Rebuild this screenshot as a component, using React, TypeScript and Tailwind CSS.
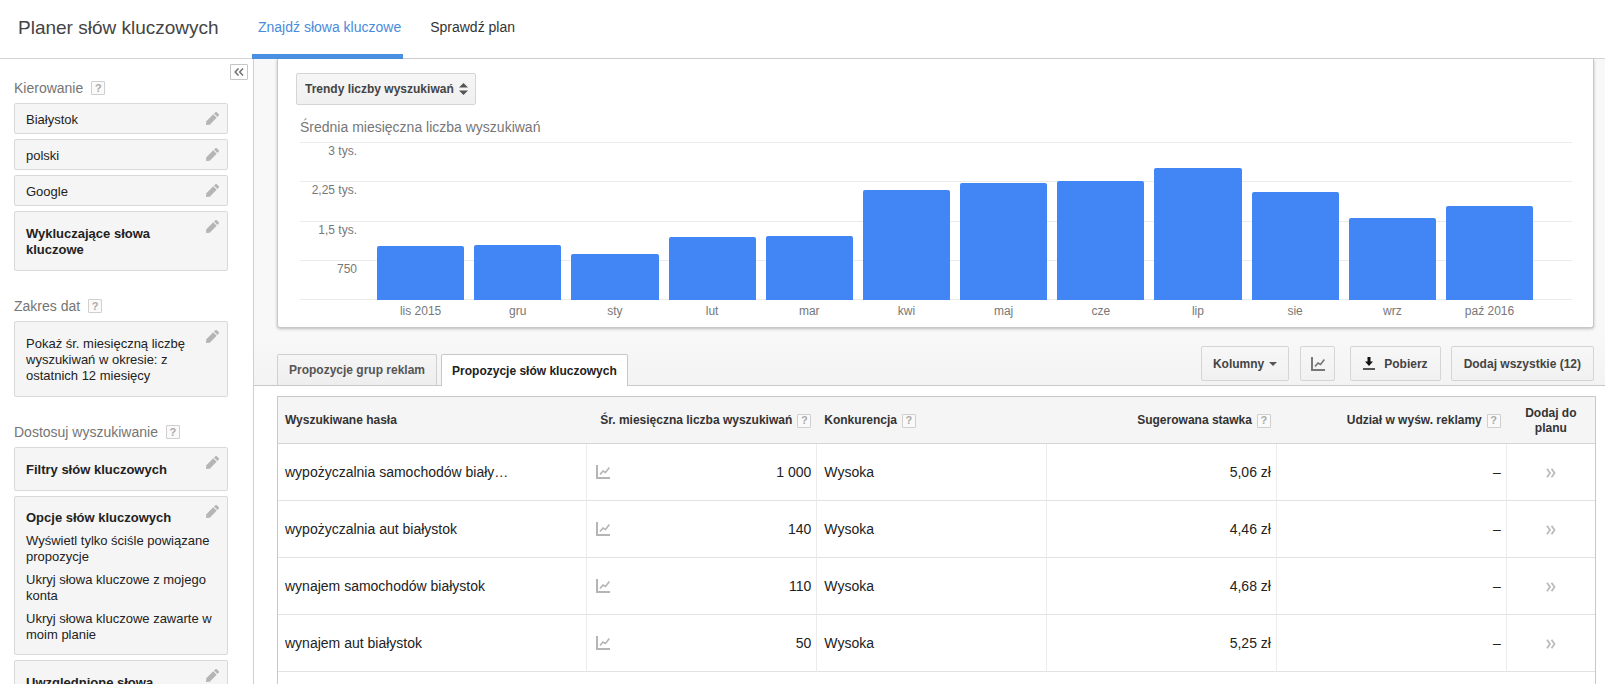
import type { ReactNode } from "react";

const months = [
  { label: "lis 2015", value: 1030 },
  { label: "gru", value: 1050 },
  { label: "sty", value: 880 },
  { label: "lut", value: 1195 },
  { label: "mar", value: 1215 },
  { label: "kwi", value: 2080 },
  { label: "maj", value: 2225 },
  { label: "cze", value: 2260 },
  { label: "lip", value: 2515 },
  { label: "sie", value: 2060 },
  { label: "wrz", value: 1560 },
  { label: "paź 2016", value: 1790 },
];

const ticks = ["3 tys.", "2,25 tys.", "1,5 tys.", "750"];
const chartMax = 3000;

const keywords = [
  { phrase: "wypożyczalnia samochodów biały…", searches: "1 000", bid: "5,06 zł" },
  { phrase: "wypożyczalnia aut białystok", searches: "140", bid: "4,46 zł" },
  { phrase: "wynajem samochodów białystok", searches: "110", bid: "4,68 zł" },
  { phrase: "wynajem aut białystok", searches: "50", bid: "5,25 zł" },
];

const Help = () => (
  <button
    type="button"
    aria-label="Pomoc"
    className="inline-flex h-[14px] w-[14px] shrink-0 items-center justify-center rounded-[1px] border border-[#cfcfcf] bg-[#fafafa] text-[11px] leading-none font-bold text-[#aaa]"
  >
    ?
  </button>
);

const Pencil = () => (
  <svg viewBox="0 0 13 13" className="h-[13px] w-[13px]" fill="#b5b5b5">
    <path d="M0 13l.3-3.800L7.200 2.300l3.500 3.500-6.900 6.900z" />
    <path d="M8 1.500L9.200.4c.5-.5 1.300-.5 1.800 0L12.600 2c.5.5.5 1.300 0 1.800L11.500 5z" />
  </svg>
);

const ChartIcon = ({ className }: { className: string }) => (
  <svg viewBox="0 0 14 14" className={className} fill="none" stroke="currentColor" strokeWidth="2">
    <path d="M1 0v13h13" />
    <path d="M4 9.500l3-3.500 2.500 1.500L13.400 2.500" strokeWidth="1.700" />
  </svg>
);

const SectionTitle = ({ children }: { children: ReactNode }) => (
  <h2 className="mb-[5px] flex items-center gap-2 text-sm leading-5 text-[#757575]">
    {children}
    <Help />
  </h2>
);

const OptionCard = ({ children, slim }: { children: ReactNode; slim?: boolean }) => (
  <div
    className={`flex justify-between rounded-[2px] border border-[#d9d9d9] bg-[#f5f5f5] pl-[11px] text-[13px] text-[#222] ${
      slim ? "pt-[7px] pb-[5px] leading-[17px]" : "pt-[14px] pb-3 leading-4"
    }`}
  >
    <div className="min-w-0 flex-1">{children}</div>
    <button type="button" aria-label="Edytuj" className={`mr-2 h-[13px] ${slim ? "mt-px" : "-mt-[6px]"}`}>
      <Pencil />
    </button>
  </div>
);

const Sidebar = () => (
  <aside className="flex w-[254px] shrink-0 flex-col overflow-hidden border-r border-[#cfcfcf]">
    <div className="flex h-0 justify-end pt-[5px] pr-[5px]">
      <button
        type="button"
        aria-label="Zwiń panel"
        className="flex h-4 w-[18px] items-center justify-center rounded-[1px] border border-[#c6c6c6] bg-white"
      >
        <svg viewBox="0 0 10 8" className="h-2 w-[10px]" fill="none" stroke="#777" strokeWidth="1.600">
          <path d="M4.500.5L1.200 4l3.300 3.500M9 .5L5.700 4 9 7.500" />
        </svg>
      </button>
    </div>
    <div className="flex flex-col gap-[25px] pt-[14px] pr-[25px] pl-[14px]">
      <section>
        <SectionTitle>Kierowanie</SectionTitle>
        <div className="flex flex-col gap-[5px]">
          <OptionCard slim>Białystok</OptionCard>
          <OptionCard slim>polski</OptionCard>
          <OptionCard slim>Google</OptionCard>
          <OptionCard>
            <b className="block w-[150px]">Wykluczające słowa kluczowe</b>
          </OptionCard>
        </div>
      </section>

      <section>
        <SectionTitle>Zakres dat</SectionTitle>
        <OptionCard>Pokaż śr. miesięczną liczbę wyszukiwań w okresie: z ostatnich 12 miesięcy</OptionCard>
      </section>

      <section>
        <SectionTitle>Dostosuj wyszukiwanie</SectionTitle>
        <div className="flex flex-col gap-[5px]">
          <OptionCard>
            <b>Filtry słów kluczowych</b>
          </OptionCard>
          <OptionCard>
            <div className="-my-px -mr-4 flex flex-col gap-[7px]">
              <b>Opcje słów kluczowych</b>
              <p>Wyświetl tylko ściśle powiązane propozycje</p>
              <p>Ukryj słowa kluczowe z mojego konta</p>
              <p>Ukryj słowa kluczowe zawarte w moim planie</p>
            </div>
          </OptionCard>
          <OptionCard>
            <b>Uwzględnione słowa</b>
          </OptionCard>
        </div>
      </section>
    </div>
  </aside>
);

const TrendChart = () => (
  <section className="mr-[11px] ml-[23px] rounded-b-[3px] border border-t-0 border-[#c8c8c8] bg-white pt-[14px] pr-[21px] pb-2 pl-[18px] shadow-[0_1px_3px_rgba(0,0,0,0.25)]">
    <div className="inline-grid items-center">
      <select
        aria-label="Wykres"
        className="col-start-1 row-start-1 h-8 w-[180px] appearance-none rounded-[2px] border border-[#d5d5d5] bg-linear-to-b from-[#f6f6f6] to-[#f0f0f0] pl-2 text-xs font-bold text-[#444]"
      >
        <option>Trendy liczby wyszukiwań</option>
      </select>
      <svg
        viewBox="0 0 9 12"
        className="pointer-events-none col-start-1 row-start-1 mr-2 h-3 w-[9px] justify-self-end"
        fill="#555"
      >
        <path d="M0 4.500L4.500 0 9 4.500zM0 7.500h9L4.500 12z" />
      </svg>
    </div>
    <h3 className="mt-3 ml-1 text-sm leading-5 text-[#777]">Średnia miesięczna liczba wyszukiwań</h3>
    <div className="mt-[5px] ml-1 grid">
      <div className="col-start-1 row-start-1 flex flex-col text-xs text-[#777]">
        {ticks.map((tick) => (
          <div key={tick} className="flex-1 border-t border-[#ebebeb] leading-4">
            <span className="block w-[57px] text-right">{tick}</span>
          </div>
        ))}
        <div className="border-t border-[#ebebeb]" />
      </div>
      <div className="col-start-1 row-start-1 mr-[39px] ml-[77px] flex h-[158px] items-end gap-[10px]">
        {months.map((m) => (
          <div
            key={m.label}
            className="flex-1 rounded-t-[2px] bg-[#4285f4]"
            style={{ height: `${(m.value / chartMax) * 100}%` }}
          />
        ))}
      </div>
    </div>
    <div className="mt-[3px] mr-[39px] ml-[81px] flex gap-[10px] text-center text-xs leading-4 text-[#777]">
      {months.map((m) => (
        <span key={m.label} className="flex-1">
          {m.label}
        </span>
      ))}
    </div>
  </section>
);

const toolbarButton =
  "flex h-[35px] items-center justify-center rounded-[2px] border border-[#d5d5d5] bg-linear-to-b from-[#f7f7f7] to-[#f1f1f1] text-xs font-bold text-[#444]";

const Toolbar = () => (
  <div className="mt-[18px] flex items-end justify-between border-b border-[#c8c8c8] pr-[11px] pl-[23px]">
    <div role="tablist" className="flex gap-1 text-xs leading-[30px] font-bold">
      <button
        type="button"
        role="tab"
        aria-selected="false"
        className="rounded-t-[2px] border border-b-0 border-[#d0d0d0] bg-linear-to-b from-[#f5f5f5] to-[#eee] px-[11px] text-[#555]"
      >
        Propozycje grup reklam
      </button>
      <button
        type="button"
        role="tab"
        aria-selected="true"
        className="-mb-px rounded-t-[2px] border border-b-0 border-[#c8c8c8] bg-white px-[10px] text-[#222]"
      >
        Propozycje słów kluczowych
      </button>
    </div>
    <div className="mb-1 flex">
      <button type="button" className={`${toolbarButton} mr-[11px] gap-[5px] px-[11px]`}>
        Kolumny
        <svg viewBox="0 0 8 4" className="h-1 w-2" fill="#555">
          <path d="M0 0h8L4 4z" />
        </svg>
      </button>
      <button type="button" aria-label="Wykres" className={`${toolbarButton} mr-[15px] w-[35px]`}>
        <ChartIcon className="h-[14px] w-[14px] shrink-0 text-[#777]" />
      </button>
      <button type="button" className={`${toolbarButton} mr-[10px] gap-[9px] px-3`}>
        <svg viewBox="0 0 12 13" className="h-[13px] w-3">
          <path d="M4.500 0h3v4.500H10L6 9 2 4.500h2.500z" fill="#111" />
          <path d="M0 11h12v2H0z" fill="#555" />
        </svg>
        Pobierz
      </button>
      <button type="button" className={`${toolbarButton} px-3`}>
        Dodaj wszystkie (12)
      </button>
    </div>
  </div>
);

const headCell = "pt-px pr-[6px] pl-[7px] text-right";
const bodyCell = "border-r border-[#ececec] pr-[5px] pl-[7px] text-right";

const KeywordTable = () => (
  <div className="mt-[10px] mr-[9px] ml-[23px] flex-1 border border-b-0 border-[#c8c8c8] bg-white">
    <table className="w-full table-fixed border-separate border-spacing-0">
      <colgroup>
        <col className="w-[23.5%]" />
        <col className="w-[17.45%]" />
        <col className="w-[17.45%]" />
        <col className="w-[17.45%]" />
        <col className="w-[17.45%]" />
        <col />
      </colgroup>
      <thead>
        <tr className="h-[47px] bg-[#f5f5f5] text-xs leading-[15px] text-[#333] *:border-b *:border-[#d5d5d5]">
          <th className="pt-px pl-[7px] text-left">Wyszukiwane hasła</th>
          <th className={headCell}>
            <span className="flex items-center justify-end gap-[5px] whitespace-nowrap">
              Śr. miesięczna liczba wyszukiwań <Help />
            </span>
          </th>
          <th className={headCell}>
            <span className="flex items-center gap-[5px]">
              Konkurencja <Help />
            </span>
          </th>
          <th className={headCell}>
            <span className="flex items-center justify-end gap-[5px]">
              Sugerowana stawka <Help />
            </span>
          </th>
          <th className={headCell}>
            <span className="flex items-center justify-end gap-[5px]">
              Udział w wyśw. reklamy <Help />
            </span>
          </th>
          <th className="px-3 pt-px text-center">Dodaj do planu</th>
        </tr>
      </thead>
      <tbody className="text-sm text-[#222]">
        {keywords.map((k) => (
          <tr key={k.phrase} className="*:h-[57px] *:border-b *:border-b-[#e2e2e2]">
            <td className="truncate border-r border-[#ececec] pl-[7px]">{k.phrase}</td>
            <td className={bodyCell}>
              <span className="flex items-center justify-between pl-[2px]">
                <ChartIcon className="h-[14px] w-[14px] text-[#b5b5b5]" />
                {k.searches}
              </span>
            </td>
            <td className="border-r border-[#ececec] pl-[7px]">Wysoka</td>
            <td className={bodyCell}>{k.bid}</td>
            <td className={bodyCell}>–</td>
            <td className="text-center">
              <button type="button" aria-label="Dodaj do planu" className="align-middle">
                <svg viewBox="0 0 10 10" className="h-[10px] w-[10px]" fill="none" stroke="#bbb" strokeWidth="1.800">
                  <path d="M1 .8L4 5 1 9.200M5.500.8l3 4.200-3 4.200" />
                </svg>
              </button>
            </td>
          </tr>
        ))}
      </tbody>
    </table>
  </div>
);

const App = () => {
  return (
    <div className="flex h-screen flex-col overflow-hidden bg-white font-['Liberation_Sans',Arial,sans-serif]">
      <header className="flex h-[59px] shrink-0 border-b border-[#d5d5d5]">
        <h1 className="w-[252px] shrink-0 pl-[18px] text-[19px] leading-[55px] text-[#444]">Planer słów kluczowych</h1>
        <nav className="-mb-px flex gap-[21px] text-sm leading-[55px]">
          <a href="#znajdz" className="h-[59px] border-b-[5px] border-[#4a90e2] pr-[2px] pl-[6px] text-[#4a8bdc]">
            Znajdź słowa kluczowe
          </a>
          <a href="#plan" className="px-[6px] text-[#333]">
            Sprawdź plan
          </a>
        </nav>
      </header>

      <div className="flex min-h-0 flex-1">
        <Sidebar />
        <main className="flex min-w-0 flex-1 flex-col">
          <div className="bg-linear-to-b from-[#f8f8f8] from-85% to-[#f3f3f3]">
            <TrendChart />
            <Toolbar />
          </div>
          <KeywordTable />
        </main>
      </div>
    </div>
  );
};

export default App;
